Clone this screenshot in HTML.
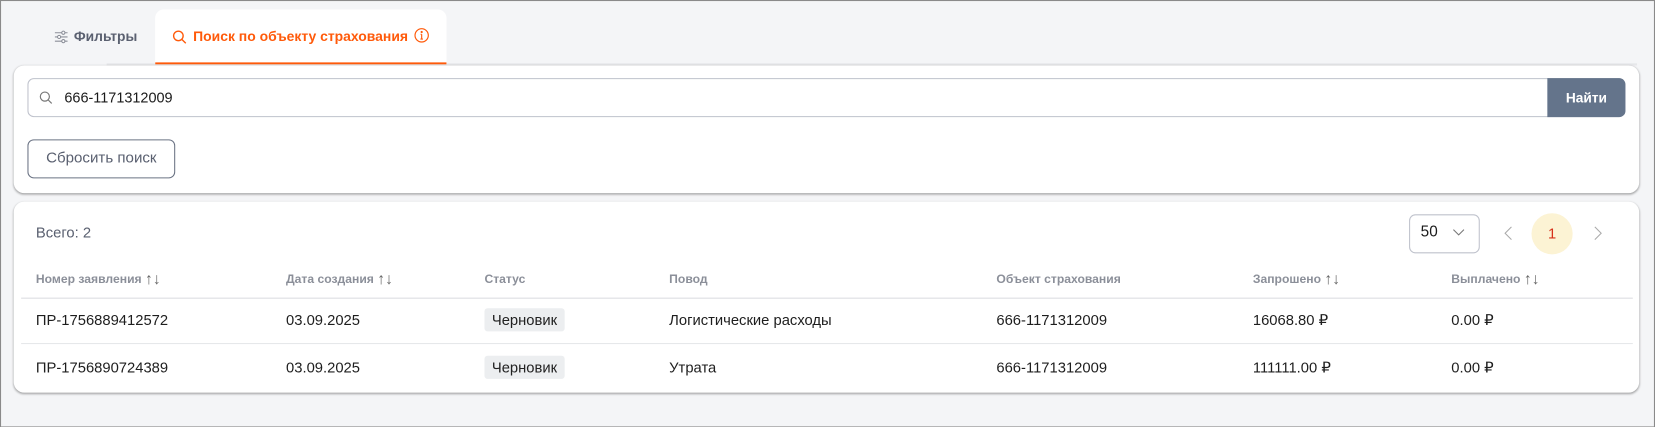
<!DOCTYPE html><html><head><style>
*{box-sizing:border-box;margin:0;padding:0}
body{width:1655px;height:427px;background:#f4f5f7;font-family:"Liberation Sans",sans-serif;position:relative;overflow:hidden}
#w{position:absolute;left:0;top:0;width:1568px;height:405px;transform:scale(1.05548);transform-origin:0 0;border:1px solid #8a8a8a}
.a{position:absolute}
.card{background:#fff;border-radius:10px;box-shadow:0 1px 2px rgba(0,0,0,.35)}
.th{position:absolute;top:256px;height:16px;line-height:16px;font-size:11.5px;font-weight:bold;color:#8b8f99;white-space:nowrap}
.th span{font-weight:normal;font-size:15px;color:#666;line-height:16px;vertical-align:top}
.td{position:absolute;font-size:14px;color:#1e1e1e}
.chip{position:absolute;background:#eceef0;border-radius:3px;font-size:14px;padding:3px 7px;color:#222}
</style></head><body><div id="w">
<div class="a" style="left:100px;top:59px;width:1450px;height:2px;background:#e6e7ea"></div>
<div class="a" style="left:146px;top:8px;width:276px;height:52px;background:#fff;border-radius:8px 8px 0 0;border-bottom:2px solid #ff5a0a"></div>
<svg class="a" style="left:50px;top:27px" width="14" height="14" viewBox="0 0 14 14" fill="none" stroke="#8b8f99" stroke-width="1"><path d="M1 3h12M1 7h12M1 11h12"/><circle cx="9" cy="3" r="1.5" fill="#fff"/><circle cx="5" cy="7" r="1.5" fill="#fff"/><circle cx="9" cy="11" r="1.5" fill="#fff"/></svg>
<div class="a" style="left:69px;top:26px;font-size:13.1px;font-weight:bold;color:#5a6070">Фильтры</div>
<svg class="a" style="left:162px;top:27px" width="14" height="14" viewBox="0 0 14 14" fill="none" stroke="#ff5a0a" stroke-width="1.3"><circle cx="6" cy="6" r="4.5"/><path d="M9.3 9.3L13 13"/></svg>
<div class="a" style="left:182px;top:26px;font-size:13.2px;font-weight:bold;color:#ff5a0a">Поиск по объекту страхования</div>
<svg class="a" style="left:391px;top:25px" width="15" height="15" viewBox="0 0 15 15" fill="none" stroke="#ff5a0a" stroke-width="1.1"><circle cx="7.5" cy="7.5" r="6.3"/><path d="M7.5 6.5v4.5M6.3 11h2.4M6.5 6.5h1"/><circle cx="7.5" cy="4.3" r=".5" fill="#ff5a0a"/></svg>
<div class="a card" style="left:12px;top:61px;width:1540px;height:121px"></div>
<div class="a" style="left:25px;top:73px;width:1514px;height:37px;border:1px solid #bfc2cc;border-radius:6px"></div>
<svg class="a" style="left:36px;top:85px" width="13" height="13" viewBox="0 0 13 13" fill="none" stroke="#777" stroke-width="1.1"><circle cx="5.5" cy="5.5" r="4.3"/><path d="M8.6 8.6L12 12"/></svg>
<div class="a" style="left:60px;top:84px;font-size:13.7px;color:#1a1a1a">666-1171312009</div>
<div class="a" style="left:1465px;top:73px;width:74px;height:37px;background:#64748b;border-radius:0 6px 6px 0;color:#fff;font-weight:bold;font-size:13px;text-align:center;line-height:37px">Найти</div>
<div class="a" style="left:25px;top:131px;width:140px;height:37px;border:1px solid #6b7384;border-radius:6px;color:#5a6070;font-size:14.3px;text-align:center;line-height:35px">Сбросить поиск</div>
<div class="a card" style="left:12px;top:190px;width:1540px;height:181px"></div>
<div class="a" style="left:33px;top:211px;font-size:14px;color:#5a6070">Всего: 2</div>
<div class="a" style="left:1334px;top:202px;width:67px;height:37px;border:1px solid #bfc2cc;border-radius:6px"></div>
<div class="a" style="left:1345px;top:211px;font-size:14.5px;color:#1a1a1a">50</div>
<svg class="a" style="left:1375px;top:215px" width="12" height="8" viewBox="0 0 12 8" fill="none" stroke="#777" stroke-width="1"><path d="M1 1.5l5 5 5-5"/></svg>
<svg class="a" style="left:1424px;top:213px" width="8" height="14" viewBox="0 0 8 14" fill="none" stroke="#aaa" stroke-width="1"><path d="M7 1L1 7l6 6"/></svg>
<div class="a" style="left:1450px;top:201px;width:39px;height:39px;border-radius:50%;background:#fcf3d4;color:#d6301a;font-size:14px;text-align:center;line-height:39px">1</div>
<svg class="a" style="left:1509px;top:213px" width="8" height="14" viewBox="0 0 8 14" fill="none" stroke="#aaa" stroke-width="1"><path d="M1 1l6 6-6 6"/></svg>
<div class="th" style="left:33px">Номер заявления <span>↑↓</span></div>
<div class="th" style="left:270px">Дата создания <span>↑↓</span></div>
<div class="th" style="left:458px">Статус</div>
<div class="th" style="left:633px">Повод</div>
<div class="th" style="left:943px">Объект страхования</div>
<div class="th" style="left:1186px">Запрошено <span>↑↓</span></div>
<div class="th" style="left:1374px">Выплачено <span>↑↓</span></div>
<div class="a" style="left:19px;top:281px;width:1527px;height:1px;background:#dcdde0"></div>
<div class="a" style="left:19px;top:324px;width:1527px;height:1px;background:#e6e7ea"></div>
<div class="td" style="left:33px;top:294px">ПР-1756889412572</div>
<div class="td" style="left:270px;top:294px">03.09.2025</div>
<div class="chip" style="left:458px;top:291px">Черновик</div>
<div class="td" style="left:633px;top:294px">Логистические расходы</div>
<div class="td" style="left:943px;top:294px">666-1171312009</div>
<div class="td" style="left:1186px;top:294px">16068.80 ₽</div>
<div class="td" style="left:1374px;top:294px">0.00 ₽</div>
<div class="td" style="left:33px;top:339px">ПР-1756890724389</div>
<div class="td" style="left:270px;top:339px">03.09.2025</div>
<div class="chip" style="left:458px;top:336px">Черновик</div>
<div class="td" style="left:633px;top:339px">Утрата</div>
<div class="td" style="left:943px;top:339px">666-1171312009</div>
<div class="td" style="left:1186px;top:339px">111111.00 ₽</div>
<div class="td" style="left:1374px;top:339px">0.00 ₽</div>
</div></body></html>
